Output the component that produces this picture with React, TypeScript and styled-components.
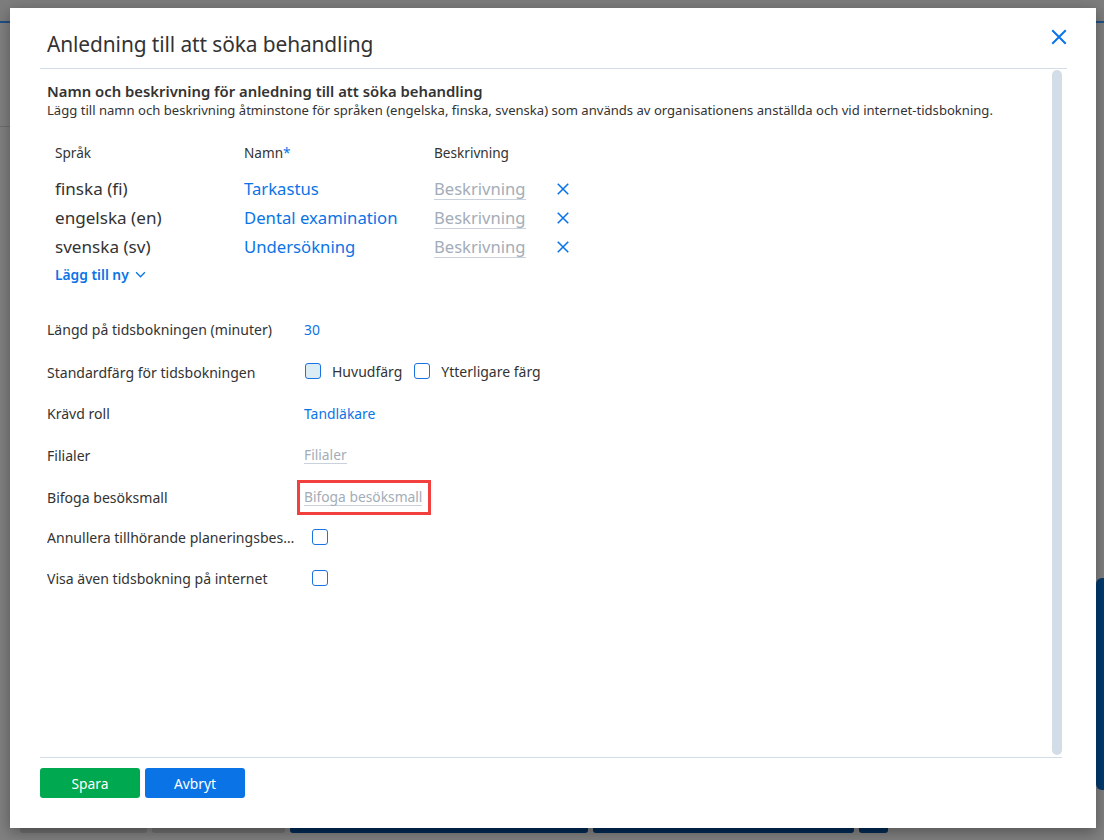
import React from "react";
import styled, { createGlobalStyle } from "styled-components";

const GlobalStyle = createGlobalStyle`
  html, body {
    margin: 0;
    padding: 0;
    width: 1104px;
    height: 840px;
    overflow: hidden;
    font-family: "Noto Sans", "Open Sans", Arial, sans-serif;
    color: #333;
  }
`;

// dimmed application behind the dialog
const Backdrop = styled.div`
  position: relative;
  width: 1104px;
  height: 840px;
  background: #808080;
  overflow: hidden;
`;

const TopStrip = styled.div`
  height: 21px;
  border-bottom: 2px solid #1d4f86;
  background: #7d7d7d;
`;

const LeftLine = styled.div`
  height: 1px;
  width: 10px;
  margin-top: 103px;
  background: #6e6e6e;
`;

const BottomTabs = styled.div`
  position: absolute;
  left: 20px;
  bottom: 7px;
  display: flex;
  gap: 5px;
`;

const BgTab = styled.div<{ $w: number; $dark?: boolean }>`
  width: ${(p) => p.$w}px;
  height: 12px;
  border-radius: 3px;
  background: ${(p) => (p.$dark ? "#012a55" : "#707070")};
`;

const SidePanel = styled.div`
  position: absolute;
  right: 0;
  top: 578px;
  width: 8px;
  height: 212px;
  border-radius: 6px 0 0 6px;
  background: #013a70;
`;

const Dialog = styled.div`
  position: absolute;
  left: 10px;
  top: 8px;
  width: 1086px;
  height: 820px;
  background: #fff;
  box-shadow: 0 4px 14px rgba(0, 0, 0, 0.35);
  display: flex;
  flex-direction: column;
`;

const Header = styled.div`
  height: 60px;
  margin: 0 29px 0 30px;
  padding-left: 7px;
  border-bottom: 1px solid #d3dde8;
  display: flex;
  align-items: center;
  justify-content: space-between;
`;

const Title = styled.h1`
  margin: 12px 0 0;
  font-size: 20.9px;
  font-weight: 400;
  color: #333;
  letter-spacing: -0.1px;
`;

const CloseButton = styled.button`
  border: none;
  background: none;
  padding: 0;
  margin: 20px -1px 0 0;
  align-self: flex-start;
  color: #0a74e6;
  cursor: pointer;
  display: flex;
`;

const BodyWrap = styled.div`
  flex: 1;
  display: flex;
  margin: 0 34px 0 30px;
  border-bottom: 1px solid #d3dde8;
`;

const Body = styled.div`
  flex: 1;
  padding: 12px 0 0 7px;
`;

const Scrollbar = styled.div`
  width: 10px;
  margin: 1px 0 2px;
  border-radius: 5px;
  background: #d3dde8;
`;

const SectionTitle = styled.h2`
  margin: 0;
  font-size: 14.85px;
  font-weight: 600;
  color: #333;
  line-height: 20px;
`;

const SectionText = styled.p`
  margin: 0;
  font-size: 13.08px;
  color: #333;
  line-height: 18px;
`;

const LangTable = styled.div`
  display: grid;
  grid-template-columns: 189px 190px 122px 40px;
  padding-left: 8px;
  margin-top: 25px;
  align-items: center;
`;

const HeadCell = styled.div`
  font-size: 13.6px;
  color: #333;
  height: 30px;
  line-height: 18px;
`;

const Required = styled.span`
  color: #0a74e6;
`;

const Cell = styled.div<{ $blue?: boolean }>`
  font-size: ${(p) => (p.$blue ? "16.7px" : "17.1px")};
  line-height: 29px;
  color: ${(p) => (p.$blue ? "#0a74e6" : "#333")};
  white-space: nowrap;
`;

const Placeholder = styled.span<{ $small?: boolean }>`
  color: #a3adb8;
  border-bottom: 1px solid #c9d2dc;
  font-size: ${(p) => (p.$small ? "13.8px" : "16.6px")};
  line-height: ${(p) => (p.$small ? "17px" : "21px")};
  display: inline-block;
`;

const RemoveIcon = styled.span`
  color: #0a74e6;
  display: flex;
  align-items: center;
  height: 29px;
`;

const AddNew = styled.button`
  grid-column: 1 / span 2;
  justify-self: start;
  border: none;
  background: none;
  padding: 0;
  margin-top: 4px;
  font-family: inherit;
  font-size: 13.8px;
  font-weight: 600;
  color: #0a74e6;
  display: flex;
  align-items: center;
  gap: 6px;
  cursor: pointer;
`;

const Form = styled.div`
  margin-top: 24px;
  display: flex;
  flex-direction: column;
`;

const FormRow = styled.div<{ $h: number }>`
  display: grid;
  grid-template-columns: 257px auto;
  align-items: center;
  height: ${(p) => p.$h}px;
`;

const Label = styled.div<{ $drop?: number }>`
  font-size: 14.05px;
  color: #333;
  white-space: nowrap;
  overflow: hidden;
  text-overflow: ellipsis;
  padding-right: 6px;
  padding-top: ${(p) => p.$drop || 0}px;
`;

const Value = styled.div<{ $link?: boolean }>`
  font-size: 13.9px;
  color: ${(p) => (p.$link ? "#0a74e6" : "#333")};
  display: flex;
  align-items: center;
`;

const Check = styled.span<{ $fill?: boolean; $offset?: number }>`
  width: 16px;
  height: 16px;
  box-sizing: border-box;
  border: 1.5px solid #1a73e0;
  border-radius: 3px;
  background: ${(p) => (p.$fill ? "#dcecf5" : "#fff")};
  margin-left: ${(p) => p.$offset || 0}px;
  display: inline-block;
`;

const CheckLabel = styled.span`
  margin: 0 12px 0 11px;
  font-size: 14px;
  color: #333;
`;

const Highlight = styled.div`
  margin-left: -7px;
  padding: 5px 6px 6px 4px;
  border: 3px solid #f2403f;
  display: inline-flex;
`;

const Footer = styled.div`
  display: flex;
  gap: 5px;
  padding: 10px 30px 0;
  height: 70px;
  box-sizing: border-box;
`;

const Btn = styled.button<{ $color: string }>`
  width: 100px;
  height: 30px;
  border: none;
  border-radius: 3px;
  background: ${(p) => p.$color};
  color: #fff;
  font-family: inherit;
  font-size: 13.8px;
  cursor: pointer;
`;

const XIcon = ({ size }: { size: number }) => (
  <svg width={size} height={size} viewBox="0 0 16 16" fill="none">
    <path d="M2 2L14 14M14 2L2 14" stroke="currentColor" strokeWidth="1.8" />
  </svg>
);

const languages = [
  { lang: "finska (fi)", name: "Tarkastus" },
  { lang: "engelska (en)", name: "Dental examination" },
  { lang: "svenska (sv)", name: "Undersökning" },
];

export default function App() {
  return (
    <>
      <GlobalStyle />
      <Backdrop>
        <TopStrip />
        <LeftLine />
        <BottomTabs>
          <BgTab $w={127} />
          <BgTab $w={133} />
          <BgTab $w={298} $dark />
          <BgTab $w={261} $dark />
          <BgTab $w={29} $dark />
        </BottomTabs>
        <SidePanel />
        <Dialog>
          <Header>
            <Title>Anledning till att söka behandling</Title>
            <CloseButton>
              <XIcon size={18} />
            </CloseButton>
          </Header>
          <BodyWrap>
            <Body>
              <SectionTitle>Namn och beskrivning för anledning till att söka behandling</SectionTitle>
              <SectionText>
                Lägg till namn och beskrivning åtminstone för språken (engelska, finska, svenska) som används av organisationens anställda och vid internet-tidsbokning.
              </SectionText>
              <LangTable>
                <HeadCell>Språk</HeadCell>
                <HeadCell>
                  Namn<Required>*</Required>
                </HeadCell>
                <HeadCell>Beskrivning</HeadCell>
                <HeadCell />
                {languages.map((l) => (
                  <React.Fragment key={l.lang}>
                    <Cell>{l.lang}</Cell>
                    <Cell $blue>{l.name}</Cell>
                    <Cell>
                      <Placeholder>Beskrivning</Placeholder>
                    </Cell>
                    <RemoveIcon>
                      <XIcon size={14} />
                    </RemoveIcon>
                  </React.Fragment>
                ))}
                <AddNew>
                  Lägg till ny
                  <svg width="11" height="11" viewBox="0 0 10 10" fill="none">
                    <path d="M1 3L5 7L9 3" stroke="currentColor" strokeWidth="1.2" />
                  </svg>
                </AddNew>
              </LangTable>
              <Form>
                <FormRow $h={42}>
                  <Label>Längd på tidsbokningen (minuter)</Label>
                  <Value $link>30</Value>
                </FormRow>
                <FormRow $h={42}>
                  <Label $drop={3}>Standardfärg för tidsbokningen</Label>
                  <Value>
                    <Check $fill $offset={1} />
                    <CheckLabel>Huvudfärg</CheckLabel>
                    <Check />
                    <CheckLabel>Ytterligare färg</CheckLabel>
                  </Value>
                </FormRow>
                <FormRow $h={42}>
                  <Label>Krävd roll</Label>
                  <Value $link>Tandläkare</Value>
                </FormRow>
                <FormRow $h={42}>
                  <Label>Filialer</Label>
                  <Value>
                    <Placeholder $small>Filialer</Placeholder>
                  </Value>
                </FormRow>
                <FormRow $h={42}>
                  <Label>Bifoga besöksmall</Label>
                  <Value>
                    <Highlight>
                      <Placeholder $small>Bifoga besöksmall</Placeholder>
                    </Highlight>
                  </Value>
                </FormRow>
                <FormRow $h={38}>
                  <Label>Annullera tillhörande planeringsbesök</Label>
                  <Value>
                    <Check $offset={8} />
                  </Value>
                </FormRow>
                <FormRow $h={44}>
                  <Label>Visa även tidsbokning på internet</Label>
                  <Value>
                    <Check $offset={8} />
                  </Value>
                </FormRow>
              </Form>
            </Body>
            <Scrollbar />
          </BodyWrap>
          <Footer>
            <Btn $color="#00a94f">Spara</Btn>
            <Btn $color="#0a74e6">Avbryt</Btn>
          </Footer>
        </Dialog>
      </Backdrop>
    </>
  );
}
